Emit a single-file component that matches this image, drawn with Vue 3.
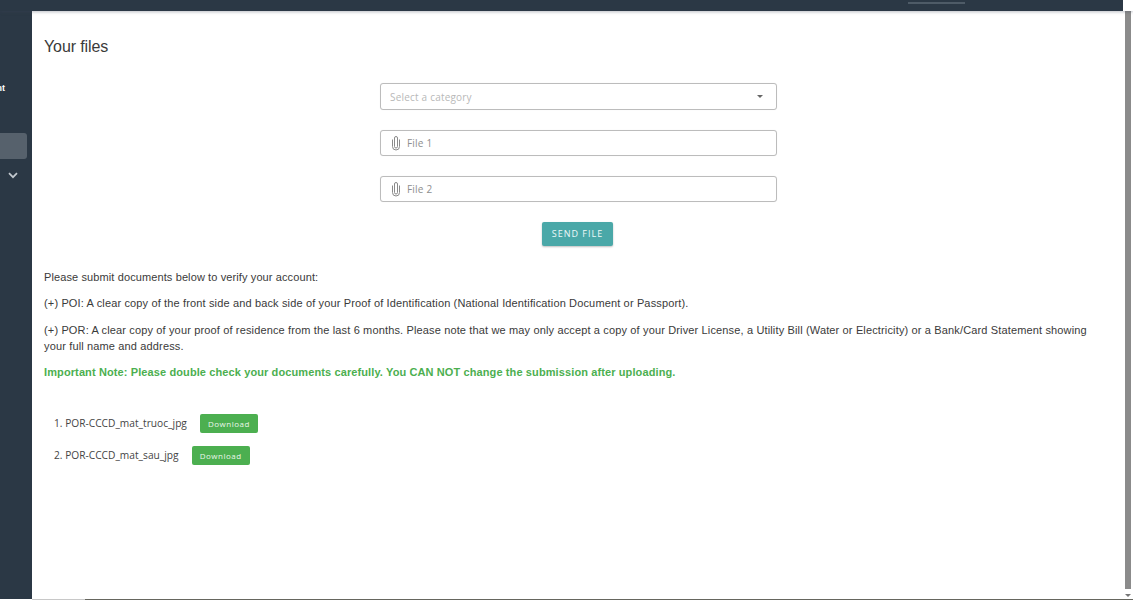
<script setup>
const files = [
  { id: 1, name: 'POR-CCCD_mat_truoc_jpg' },
  { id: 2, name: 'POR-CCCD_mat_sau_jpg' }
]
const inputs = ['File 1', 'File 2']
</script>

<template>
  <div class="page">
    <header class="topbar">
      <span class="tab-line"></span>
    </header>
    <div class="body">
      <aside class="sidebar">
        <div class="side-label">nt</div>
        <div class="side-active"></div>
        <div class="side-chev">
          <svg width="10" height="7" viewBox="0 0 10 7"><path d="M1 1.2 5 5.2 9 1.2" fill="none" stroke="#c3c9cf" stroke-width="1.7"/></svg>
        </div>
      </aside>
      <main class="main">
        <h1 class="title">Your files</h1>
        <form class="form" @submit.prevent>
          <div class="field select">
            <span class="placeholder">Select a category</span>
            <span class="caret"></span>
          </div>
          <div v-for="label in inputs" :key="label" class="field file">
            <svg class="clip" width="10" height="16" viewBox="0 0 10 16"><path d="M2.5 4.5V11.5a3.5 3.5 0 0 0 7 0V4.5" fill="none" stroke="#8a8a8a" stroke-width="1"/><path d="M4.5 11.5V3a1.5 1.5 0 0 1 3 0V11.5a1.5 1.5 0 0 1-3 0" fill="none" stroke="#8a8a8a" stroke-width="1"/></svg>
            <span class="placeholder dark">{{ label }}</span>
          </div>
          <button class="send" type="button">SEND FILE</button>
        </form>
        <div class="copy">
          <p class="first">Please submit documents below to verify your account:</p>
          <p class="gap">(+) POI: A clear copy of the front side and back side of your Proof of Identification (National Identification Document or Passport).</p>
          <p>(+) POR: A clear copy of your proof of residence from the last 6 months. Please note that we may only accept a copy of your Driver License, a Utility Bill (Water or Electricity) or a Bank/Card Statement showing your full name and address.</p>
          <p class="note">Important Note: Please double check your documents carefully. You CAN NOT change the submission after uploading.</p>
        </div>
        <ul class="list">
          <li v-for="f in files" :key="f.id">
            <span class="name">{{ f.id }}. {{ f.name }}</span>
            <button class="dl" type="button">Download</button>
          </li>
        </ul>
      </main>
      <div class="scroll">
        <div class="thumb"></div>
        <span class="arrow"></span>
      </div>
    </div>
    <div class="bottom"><span class="bottom-light"></span><span class="bottom-dark"></span></div>
  </div>
</template>

<style>
html, body { margin: 0; overflow: hidden; }
</style>

<style scoped>
.page { width: 1133px; height: 600px; display: flex; flex-direction: column; background: #fff; overflow: hidden; }
.topbar { height: 11px; flex: none; background: #2b3845; border-right: 10px solid #fff; box-shadow: 0 1px 3px rgba(60,70,90,.35); position: relative; z-index: 2; box-sizing: border-box; padding: 2px 0 0 908px; }
.tab-line { display: block; width: 57px; height: 2px; background: #4e5b67; }
.body { flex: 1; min-height: 0; display: flex; }
.sidebar { width: 32px; flex: none; background: #2b3845; overflow: hidden; }
.side-label { margin-top: 70px; height: 14px; font: 700 9px/14px "Liberation Sans", sans-serif; color: #fff; margin-left: -7px; width: 12px; text-align: right; }
.side-active { margin-top: 38px; width: 27px; height: 26px; background: #56616c; border-radius: 0 3px 3px 0; }
.side-chev { margin: 13px 0 0 8px; height: 7px; display: flex; }
.main { flex: 1; min-width: 0; padding: 0 34px 0 12px; font-family: "Liberation Sans", Arial, sans-serif; color: #333; }
.title { margin: 28px 0 0; font-size: 16px; font-weight: 400; line-height: 16px; color: #3a3a3a; letter-spacing: -.1px; }
.form { width: 397px; margin: 28px 0 0 336px; display: flex; flex-direction: column; align-items: center; font-family: "Open Sans", sans-serif; }
.field { box-sizing: border-box; width: 100%; border: 1px solid #bcbcbc; border-radius: 3px; display: flex; align-items: center; background: #fff; box-shadow: 0 0 1px rgba(0,0,0,.1); }
.select { height: 27px; padding: 0 13px 0 9px; justify-content: space-between; }
.file { height: 26px; margin-top: 20px; padding-left: 9px; gap: 7px; }
.placeholder { font-size: 10px; color: #b8b8b8; letter-spacing: .2px; line-height: 14px; }
.placeholder.dark { color: #8e8e8e; }
.caret { width: 0; height: 0; border-left: 3.5px solid transparent; border-right: 3.5px solid transparent; border-top: 3.5px solid #666; }
.send { margin-top: 20px; margin-right: 2px; width: 71px; height: 24px; border: 0; border-radius: 2px; background: #4aa8a8; color: #eef8f8; font: 400 9px/24px "Open Sans", sans-serif; letter-spacing: 1px; padding: 0; box-shadow: 0 1px 2px rgba(0,0,0,.25); }
.copy { margin-top: 23px; font-size: 11px; line-height: 16px; letter-spacing: .145px; color: #3a3a3a; }
.copy p { margin: 0 0 10px; }
.copy .first { letter-spacing: .11px; }
.copy .gap { margin-bottom: 11px; }
.copy .note { color: #4caf50; font-weight: 700; letter-spacing: .11px; }
.list { list-style: none; margin: 34px 0 0; padding: 0 0 0 10px; font-family: "Open Sans", sans-serif; font-size: 10.2px; color: #444; }
.list li { display: flex; align-items: center; gap: 13px; height: 19px; margin-bottom: 13px; }
.name { margin-bottom: 2px; }
.dl { width: 58px; height: 19px; border: 0; border-radius: 2px; background: #4caf50; color: #eaf6ea; font: 400 8px/19px "Open Sans", sans-serif; letter-spacing: .5px; padding: 0; }
.scroll { width: 9px; flex: none; padding-left: 1px; display: flex; flex-direction: column; align-items: flex-start; box-sizing: border-box; }
.thumb { width: 6px; flex: 1; background: #8b8b8b; }
.arrow { margin: 5px 0 2px; width: 0; height: 0; border-left: 3px solid transparent; border-right: 3px solid transparent; border-top: 3px solid #777; }
.bottom { height: 1px; flex: none; display: flex; padding-left: 32px; }
.bottom-light { width: 53px; background: #c8c8c8; }
.bottom-dark { flex: 1; background: #66665e; }
</style>
